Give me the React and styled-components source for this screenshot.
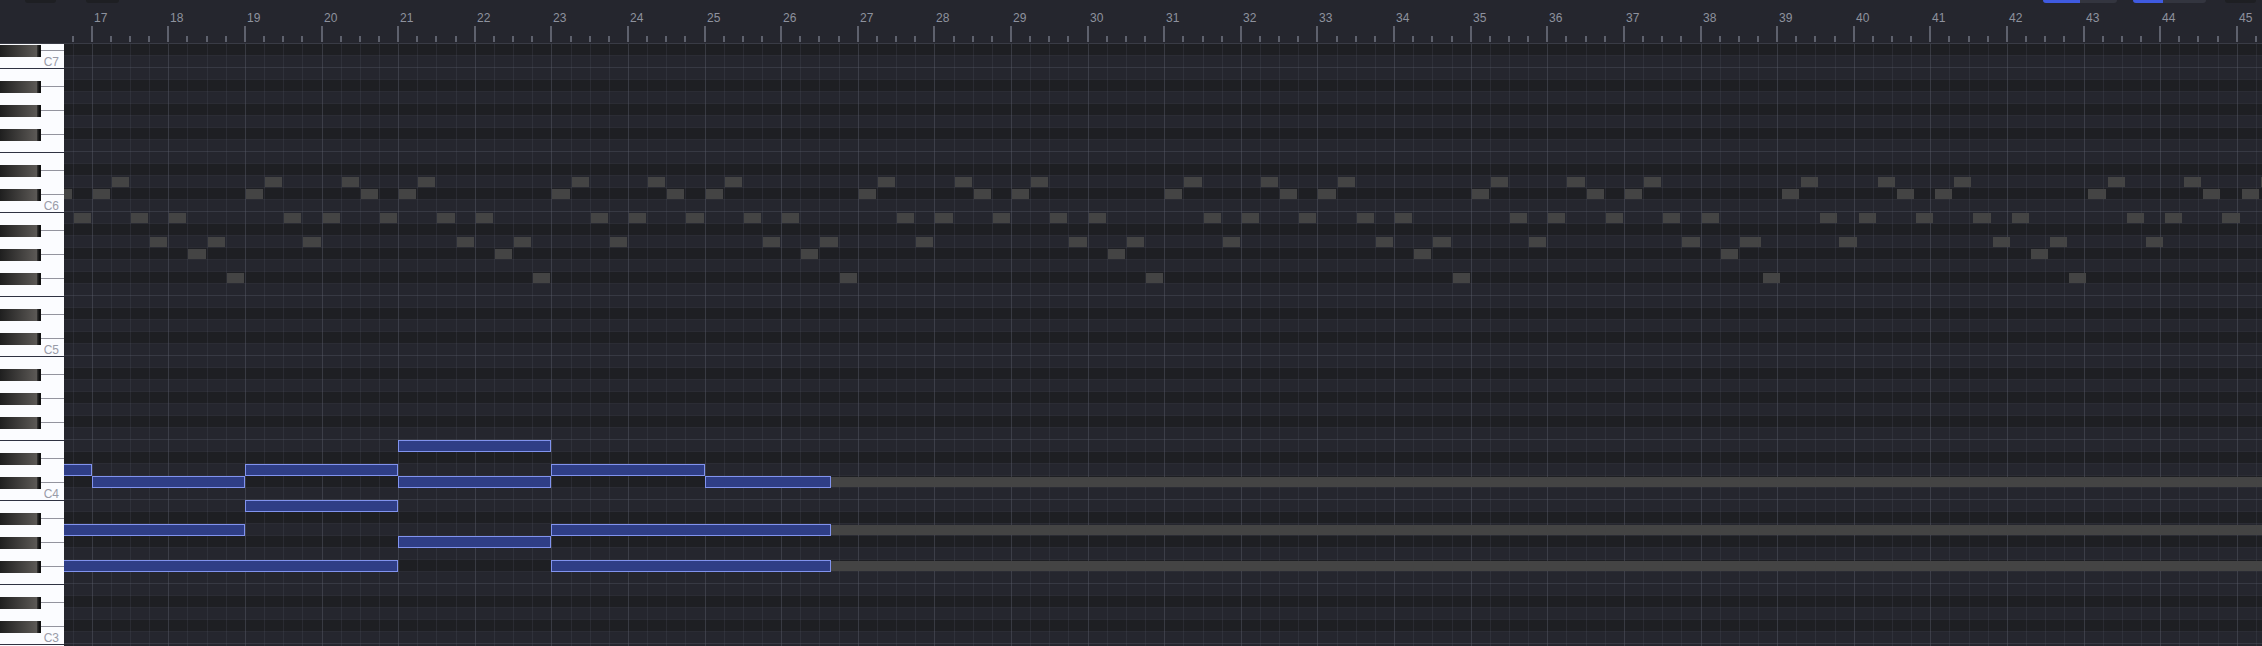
import React from "react";
import styled, { createGlobalStyle } from "styled-components";

const GlobalStyle = createGlobalStyle`
  * { box-sizing: border-box; }
  body {
    margin: 0;
    background: #25262e;
    font-family: "Liberation Sans", Arial, sans-serif;
    overflow: hidden;
  }
`;

const KEYS_WIDTH = 64;
const VIEW_WIDTH = 2262;
const ROW = 12;
const ORIGIN = 92.2;
const BEAT = 19.1525;
const FIRST_BAR = 17;
const CLIP_END = 831;

const beatX = (beat) => Math.floor(ORIGIN + beat * BEAT);
const barX = (bar) => beatX((bar - FIRST_BAR) * 4);

const ROWS = Array.from({ length: 51 }, (_, k) => ({
  black: [0, 3, 5, 7, 10].includes(k % 12),
  strong: k % 12 === 2 || k % 12 === 9,
  lastOfGroup: k % 12 === 1 || k % 12 === 8,
  label: k % 12 === 1 ? `C${7 - (k - 1) / 12}` : null,
}));

const BEATS = Array.from({ length: 115 }, (_, i) => {
  const beat = i - 1;
  return {
    beat,
    width: beatX(beat + 1) - beatX(beat),
    bar: beat % 4 === 0 ? FIRST_BAR + beat / 4 : null,
  };
});

// From beat 87 on, the melody is played slightly behind the grid.
const LATE_FROM = 87;
const LATE_BY = 0.2;
const melodyX = (beat) => beatX(beat >= LATE_FROM ? beat + LATE_BY : beat);

const MELODY = [12, 11, 14, 16, 14, 17, 16, 19, 12, 11, 14, 16, 14, 11, 12, 14];
const GHOSTS = Array.from({ length: 116 }, (_, i) => {
  const beat = i - 2;
  return {
    row: MELODY[(beat + 16) % 16],
    start: melodyX(beat) + 1,
    end: melodyX(beat + 1) - 1,
  };
});

const TAILS = [36, 40, 43].map((row) => ({ row, start: CLIP_END, end: VIEW_WIDTH }));

const NOTES = [
  { row: 33, start: barX(21), end: barX(23) },
  { row: 35, start: barX(15), end: barX(17) },
  { row: 35, start: barX(19), end: barX(21) },
  { row: 35, start: barX(23), end: barX(25) },
  { row: 36, start: barX(17), end: barX(19) },
  { row: 36, start: barX(21), end: barX(23) },
  { row: 36, start: barX(25), end: CLIP_END },
  { row: 38, start: barX(19), end: barX(21) },
  { row: 40, start: barX(15), end: barX(19) },
  { row: 40, start: barX(23), end: CLIP_END },
  { row: 41, start: barX(21), end: barX(23) },
  { row: 43, start: barX(15), end: barX(21) },
  { row: 43, start: barX(23), end: CLIP_END },
];

const Editor = styled.div`
  display: flex;
  flex-direction: column;
  width: 100%;
  height: 646px;
  overflow: hidden;
`;

const Header = styled.header`
  flex: none;
  display: flex;
  flex-direction: column;
  height: 44px;
  border-bottom: 1px solid #393b45;
`;

const ToolbarEdge = styled.div`
  flex: none;
  display: flex;
  height: 3px;
`;

const Pill = styled.div`
  width: ${(p) => p.$width}px;
  margin-left: ${(p) => p.$gap}px;
  border-radius: 0 0 ${(p) => p.$radius}px ${(p) => p.$radius}px;
  background: ${(p) => p.$color};
  overflow: hidden;
`;

const PillFill = styled.div`
  width: ${(p) => p.$width}px;
  height: 100%;
  background: #3f5ae0;
`;

const Ruler = styled.div`
  display: flex;
  height: 39px;
  padding-left: 72px;
  overflow: hidden;
`;

const RulerCell = styled.div`
  flex: none;
  display: flex;
  flex-direction: column;
  justify-content: flex-end;
  width: ${(p) => p.$width}px;
`;

const BarLabel = styled.span`
  height: 14px;
  margin-bottom: 1px;
  padding-left: 3px;
  font-size: 12px;
  line-height: 14px;
  color: #8e929e;
`;

const Tick = styled.div`
  width: 2px;
  height: ${(p) => (p.$major ? 16 : 6)}px;
  background: #5e616d;
`;

const Body = styled.main`
  flex: 1;
  display: flex;
  min-height: 0;
`;

const Keyboard = styled.div`
  flex: none;
  width: ${KEYS_WIDTH}px;
  padding-top: 1px;
  background: #fbfcff;
  overflow: hidden;
`;

const Key = styled.div`
  display: flex;
  justify-content: ${(p) => (p.$black ? "flex-start" : "flex-end")};
  height: ${ROW}px;
  border-bottom: ${(p) => (p.$divider ? "1px solid #2f3242" : "none")};
`;

const BlackKey = styled.div`
  width: 41px;
  height: ${ROW}px;
  background: linear-gradient(
    90deg,
    #1f1f1f 0,
    #5c5956 37px,
    #353433 37px,
    #2a2a2a 38px,
    #101010 39px,
    #101010 41px
  );
`;

const KeySeam = styled.div`
  flex: 1;
  height: 6px;
  border-bottom: 1px solid #93949e;
`;

const KeyLabel = styled.span`
  padding-right: 5px;
  font-size: 12px;
  line-height: 11px;
  color: #999ba8;
`;

const Grid = styled.div`
  position: relative;
  flex: 1;
  min-width: 0;
  overflow: hidden;
`;

const Lanes = styled.div`
  margin-top: -1px;
`;

const Lane = styled.div`
  height: ${ROW}px;
  border-top: 1px solid ${(p) => (p.$strong ? "#373943" : "#2b2c34")};
  background: ${(p) => (p.$black ? "#1e1f23" : "#25262e")};
`;

const BeatLines = styled.div`
  position: absolute;
  inset: 0;
  display: flex;
  padding-left: 9px;
`;

const BeatColumn = styled.div`
  flex: none;
  width: ${(p) => p.$width}px;
  border-left: 1px solid ${(p) => (p.$major ? "rgba(92, 96, 110, 0.42)" : "rgba(92, 96, 110, 0.2)")};
`;

const GhostNote = styled.div`
  position: absolute;
  left: ${(p) => p.$start - KEYS_WIDTH}px;
  top: ${(p) => p.$row * ROW + 1}px;
  width: ${(p) => p.$end - p.$start}px;
  height: 10px;
  background: #444444;
`;

const Note = styled.div`
  position: absolute;
  left: ${(p) => p.$start - KEYS_WIDTH}px;
  top: ${(p) => p.$row * ROW}px;
  width: ${(p) => p.$end - p.$start}px;
  height: ${ROW}px;
  border: 1px solid #8193ee;
  background: #2f3e86;
`;

function TimeRuler() {
  return (
    <Ruler>
      {BEATS.map(({ beat, width, bar }) => (
        <RulerCell key={beat} $width={width}>
          {bar !== null && <BarLabel>{bar}</BarLabel>}
          <Tick $major={bar !== null} />
        </RulerCell>
      ))}
    </Ruler>
  );
}

function PianoKeys() {
  return (
    <Keyboard>
      {ROWS.map((row, k) => (
        <Key key={k} $black={row.black} $divider={row.lastOfGroup}>
          {row.black && <BlackKey />}
          {row.black && <KeySeam />}
          {row.label && <KeyLabel>{row.label}</KeyLabel>}
        </Key>
      ))}
    </Keyboard>
  );
}

function NoteGrid() {
  return (
    <Grid>
      <Lanes>
        {ROWS.map((row, k) => (
          <Lane key={k} $black={row.black} $strong={row.strong} />
        ))}
      </Lanes>
      <BeatLines>
        {BEATS.map(({ beat, width, bar }) => (
          <BeatColumn key={beat} $width={width} $major={bar !== null} />
        ))}
      </BeatLines>
      {[...GHOSTS, ...TAILS].map((n, i) => (
        <GhostNote key={i} $row={n.row} $start={n.start} $end={n.end} />
      ))}
      {NOTES.map((n, i) => (
        <Note key={i} $row={n.row} $start={n.start} $end={n.end} />
      ))}
    </Grid>
  );
}

export default function App() {
  return (
    <Editor>
      <GlobalStyle />
      <Header>
        <ToolbarEdge>
          <Pill $gap={25} $width={31} $radius={8} $color="#1e1f23" />
          <Pill $gap={30} $width={33} $radius={8} $color="#1e1f23" />
          <Pill $gap={1924} $width={74} $radius={3} $color="#33353f">
            <PillFill $width={37} />
          </Pill>
          <Pill $gap={16} $width={73} $radius={3} $color="#33353f">
            <PillFill $width={30} />
          </Pill>
          <Pill $gap={19} $width={31} $radius={8} $color="#1e1f23" />
        </ToolbarEdge>
        <TimeRuler />
      </Header>
      <Body>
        <PianoKeys />
        <NoteGrid />
      </Body>
    </Editor>
  );
}
